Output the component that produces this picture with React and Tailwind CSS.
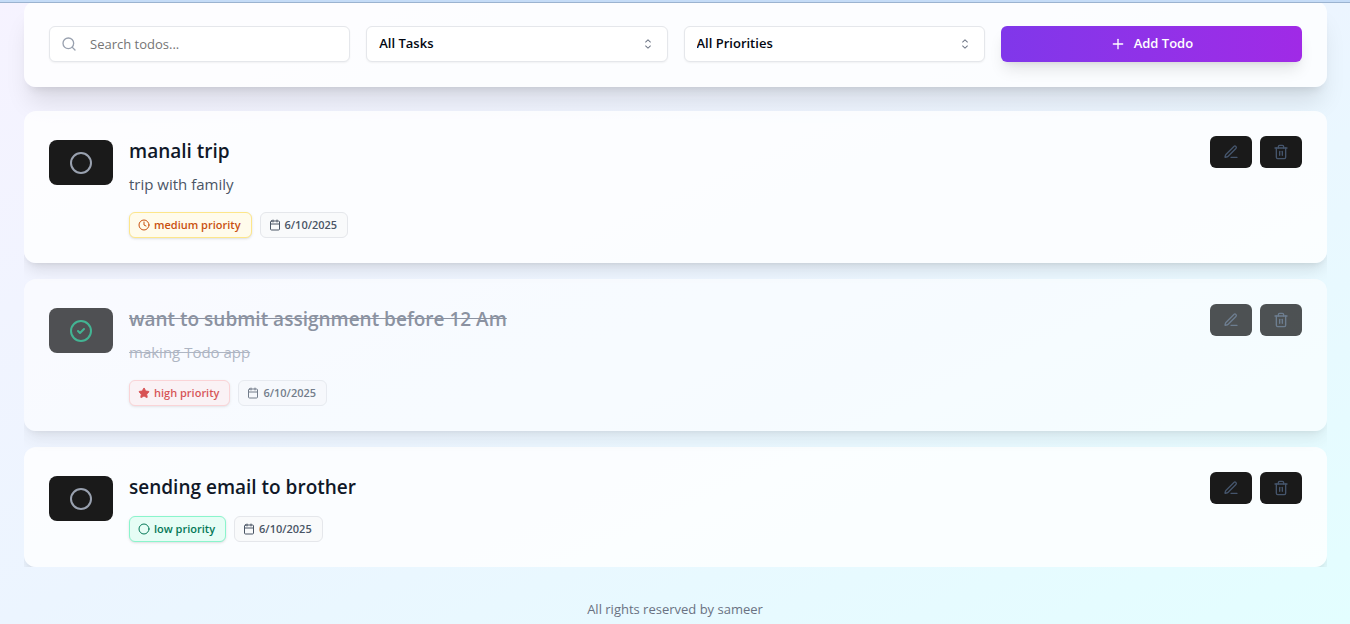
import { Search, Plus, Circle, CircleCheck, Clock, Star, Calendar, Trash2 } from "lucide-react";

function PenIcon() {
  return (
    <svg
      viewBox="0 0 24 24"
      className="size-4"
      fill="none"
      stroke="currentColor"
      strokeWidth="2"
      strokeLinecap="round"
      strokeLinejoin="round"
      aria-hidden="true"
    >
      <path d="M12 20h9" />
      <path d="M16.376 3.622a1 1 0 0 1 3.002 3.002L7.368 18.635a2 2 0 0 1-.855.506l-2.872.838a.5.5 0 0 1-.62-.62l.838-2.872a2 2 0 0 1 .506-.854z" />
    </svg>
  );
}

function CaretIcon({ className }) {
  return (
    <svg viewBox="0 0 15 15" className={className} fill="currentColor" aria-hidden="true">
      <path
        fillRule="evenodd"
        clipRule="evenodd"
        d="M4.93179 5.43179C4.75605 5.60753 4.75605 5.89245 4.93179 6.06819C5.10753 6.24392 5.39245 6.24392 5.56819 6.06819L7.49999 4.13638L9.43179 6.06819C9.60753 6.24392 9.89245 6.24392 10.0682 6.06819C10.2439 5.89245 10.2439 5.60753 10.0682 5.43179L7.81819 3.18179C7.73379 3.0974 7.61933 3.04999 7.49999 3.04999C7.38064 3.04999 7.26618 3.0974 7.18179 3.18179L4.93179 5.43179ZM10.0682 9.56819C10.2439 9.39245 10.2439 9.10753 10.0682 8.93179C9.89245 8.75606 9.60753 8.75606 9.43179 8.93179L7.49999 10.8636L5.56819 8.93179C5.39245 8.75606 5.10753 8.75606 4.93179 8.93179C4.75605 9.10753 4.75605 9.39245 4.93179 9.56819L7.18179 11.8182C7.35753 11.9939 7.64245 11.9939 7.81819 11.8182L10.0682 9.56819Z"
      />
    </svg>
  );
}

const priorities = {
  medium: { Icon: Clock, fill: "none", style: "border-[#fde68a] bg-[#fffbeb] text-[#c9500f]" },
  high: { Icon: Star, fill: "currentColor", style: "border-[#fecaca] bg-[#fef2f2] text-[#d01c1c]" },
  low: { Icon: Circle, fill: "none", style: "border-[#8af5cc] bg-[#e6fdf5] text-[#047857]" },
};

const todos = [
  { title: "manali trip", note: "trip with family", priority: "medium", date: "6/10/2025", done: false },
  { title: "want to submit assignment before 12 Am", note: "making Todo app", priority: "high", date: "6/10/2025", done: true },
  { title: "sending email to brother", note: "", priority: "low", date: "6/10/2025", done: false },
];

function FilterSelect({ label, options }) {
  return (
    <div className="relative">
      <select
        aria-label={label}
        className="h-9 w-full appearance-none rounded-md border border-gray-200 bg-white px-3 text-[13px] font-semibold text-gray-950 shadow-xs"
      >
        {options.map((option) => (
          <option key={option}>{option}</option>
        ))}
      </select>
      <CaretIcon className="pointer-events-none absolute top-2.5 right-3 size-4 text-gray-500" />
    </div>
  );
}

function Todo({ title, note, priority, date, done }) {
  const { Icon, fill, style } = priorities[priority];
  return (
    <li
      className={`flex items-start gap-4 rounded-xl border border-transparent bg-white/80 p-6 shadow-lg ${done ? "opacity-75" : ""}`}
    >
      <button
        type="button"
        aria-label={done ? "Mark as not done" : "Mark as done"}
        className="mt-1 flex h-[45px] w-16 shrink-0 items-center justify-center rounded-lg bg-[#1a1a1a]"
      >
        {done ? <CircleCheck className="size-6 text-[#0a9f70]" /> : <Circle className="size-6 text-gray-400" />}
      </button>
      <div className="min-w-0 grow">
        <h3 className={`text-[19px] leading-[30px] font-semibold ${done ? "text-gray-500 line-through" : "text-gray-900"}`}>
          {title}
        </h3>
        {note && (
          <p className={`mt-1.5 text-[15px] leading-6 ${done ? "text-gray-400 line-through" : "text-gray-600"}`}>{note}</p>
        )}
        <div className={`flex flex-wrap gap-2 text-[11px] font-semibold ${note ? "mt-4" : "mt-3.5"}`}>
          <span className={`flex h-[26px] items-center gap-1 rounded-md border pr-2.5 pl-2 shadow-sm ${style}`}>
            <Icon className="size-3" fill={fill} />
            {priority} priority
          </span>
          <span className="flex h-[26px] items-center gap-1 rounded-md border border-gray-200 bg-gray-50 pr-2.5 pl-2 text-gray-600">
            <Calendar className="size-3" />
            {date}
          </span>
        </div>
      </div>
      <div className="flex gap-2">
        <button
          type="button"
          aria-label={`Edit ${title}`}
          className="flex h-8 w-[42px] items-center justify-center rounded-md bg-[#1a1a1a] text-slate-600"
        >
          <PenIcon />
        </button>
        <button
          type="button"
          aria-label={`Delete ${title}`}
          className="flex h-8 w-[42px] items-center justify-center rounded-md bg-[#1a1a1a] text-slate-600"
        >
          <Trash2 className="size-4" />
        </button>
      </div>
    </li>
  );
}

export default function App() {
  return (
    <div className="min-h-screen bg-linear-to-br from-[#f6f3ff] via-[#ecf5ff] to-[#e3feff] font-['Open_Sans','Noto_Sans',sans-serif]">
      <div className="relative z-10 h-[3px] border-b border-[#9bb3d0] bg-[#c5dcf7]" />
      <main className="-mt-0.5 pr-[23px] pl-6">
        <section className="grid grid-cols-4 gap-4 rounded-xl border border-transparent bg-white/80 p-6 shadow-xl">
          <div className="relative">
            <Search className="pointer-events-none absolute top-2.5 left-3 size-4 text-gray-400" />
            <input
              type="search"
              aria-label="Search todos"
              placeholder="Search todos..."
              className="h-9 w-full rounded-md border border-gray-200 bg-white pr-3 pl-10 text-[13px] shadow-xs placeholder:text-[#757575]"
            />
          </div>
          <FilterSelect label="Filter by status" options={["All Tasks", "Active", "Completed"]} />
          <FilterSelect label="Filter by priority" options={["All Priorities", "High", "Medium", "Low"]} />
          <button
            type="button"
            className="flex h-9 items-center justify-center gap-2 rounded-md bg-linear-to-r from-[#8037ea] to-[#a02ae6] text-[13px] font-semibold text-white shadow-lg"
          >
            <Plus className="size-4" />
            Add Todo
          </button>
        </section>
        <ul className="mt-6 flex flex-col gap-4 overflow-hidden">
          {todos.map((todo) => (
            <Todo key={todo.title} {...todo} />
          ))}
        </ul>
      </main>
      <footer className="pt-8 text-center text-[13px] leading-5 text-gray-500">All rights reserved by sameer</footer>
    </div>
  );
}
